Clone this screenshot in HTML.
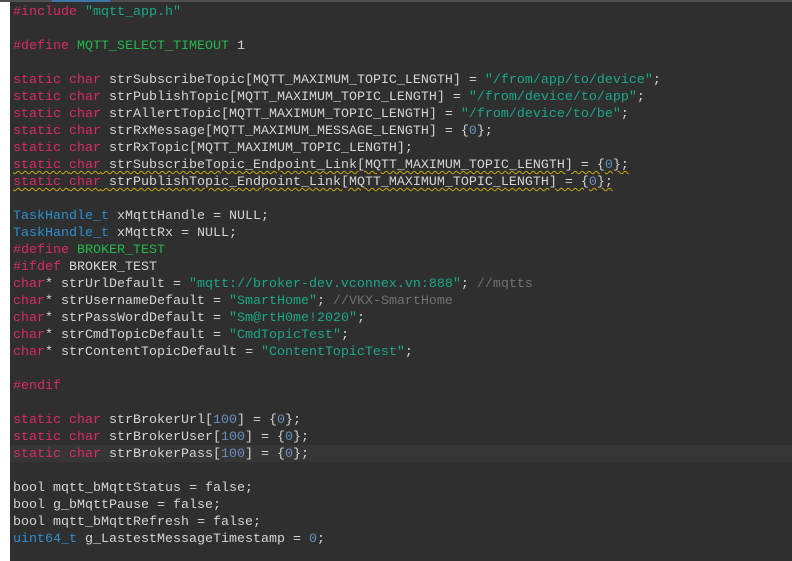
<!DOCTYPE html>
<html><head><meta charset="utf-8"><style>
html,body{margin:0;padding:0;width:792px;height:561px;overflow:hidden;background:#2f2f2f;}
.side{position:absolute;left:0;top:0;width:10px;height:561px;background:#fff;}
.top{position:absolute;left:0;top:0;width:792px;height:2px;background:#505050;}
.tab{position:absolute;left:52px;top:0;width:58px;height:2px;background:#3f74a8;}
.hl{position:absolute;left:10px;top:445px;width:782px;height:17px;background:#363636;}
pre{position:absolute;left:13px;top:4px;margin:0;font-family:"Liberation Mono",monospace;font-size:13.33px;line-height:17px;color:#d4d4d4;}
.k{color:#dc2a64}.m{color:#22b84a}.s{color:#19a888}.t{color:#2c8fd0}.n{color:#6b8fc0}.c{color:#707070}
.y{text-decoration:underline wavy #c8a800;text-decoration-thickness:1px;text-underline-offset:2px}
</style></head><body>
<div class="side"></div><div class="top"></div><div class="tab"></div><div class="hl"></div>
<pre><span class="k">#include</span> <span class="s">"mqtt_app.h"</span>

<span class="k">#define</span> <span class="m">MQTT_SELECT_TIMEOUT</span> 1

<span class="k">static</span> <span class="k">char</span> strSubscribeTopic[MQTT_MAXIMUM_TOPIC_LENGTH] = <span class="s">"/from/app/to/device"</span>;
<span class="k">static</span> <span class="k">char</span> strPublishTopic[MQTT_MAXIMUM_TOPIC_LENGTH] = <span class="s">"/from/device/to/app"</span>;
<span class="k">static</span> <span class="k">char</span> strAllertTopic[MQTT_MAXIMUM_TOPIC_LENGTH] = <span class="s">"/from/device/to/be"</span>;
<span class="k">static</span> <span class="k">char</span> strRxMessage[MQTT_MAXIMUM_MESSAGE_LENGTH] = {<span class="n">0</span>};
<span class="k">static</span> <span class="k">char</span> strRxTopic[MQTT_MAXIMUM_TOPIC_LENGTH];
<span class="y"><span class="k">static</span> <span class="k">char</span> strSubscribeTopic_Endpoint_Link[MQTT_MAXIMUM_TOPIC_LENGTH] = {<span class="n">0</span>};</span>
<span class="y"><span class="k">static</span> <span class="k">char</span> strPublishTopic_Endpoint_Link[MQTT_MAXIMUM_TOPIC_LENGTH] = {<span class="n">0</span>};</span>

<span class="t">TaskHandle_t</span> xMqttHandle = NULL;
<span class="t">TaskHandle_t</span> xMqttRx = NULL;
<span class="k">#define</span> <span class="m">BROKER_TEST</span>
<span class="k">#ifdef</span> BROKER_TEST
<span class="k">char</span>* strUrlDefault = <span class="s">"mqtt://broker-dev.vconnex.vn:888"</span>; <span class="c">//mqtts</span>
<span class="k">char</span>* strUsernameDefault = <span class="s">"SmartHome"</span>; <span class="c">//VKX-SmartHome</span>
<span class="k">char</span>* strPassWordDefault = <span class="s">"Sm@rtH0me!2020"</span>;
<span class="k">char</span>* strCmdTopicDefault = <span class="s">"CmdTopicTest"</span>;
<span class="k">char</span>* strContentTopicDefault = <span class="s">"ContentTopicTest"</span>;

<span class="k">#endif</span>

<span class="k">static</span> <span class="k">char</span> strBrokerUrl[<span class="n">100</span>] = {<span class="n">0</span>};
<span class="k">static</span> <span class="k">char</span> strBrokerUser[<span class="n">100</span>] = {<span class="n">0</span>};
<span class="k">static</span> <span class="k">char</span> strBrokerPass[<span class="n">100</span>] = {<span class="n">0</span>};

bool mqtt_bMqttStatus = false;
bool g_bMqttPause = false;
bool mqtt_bMqttRefresh = false;
<span class="t">uint64_t</span> g_LastestMessageTimestamp = <span class="n">0</span>;
</pre>
</body></html>
